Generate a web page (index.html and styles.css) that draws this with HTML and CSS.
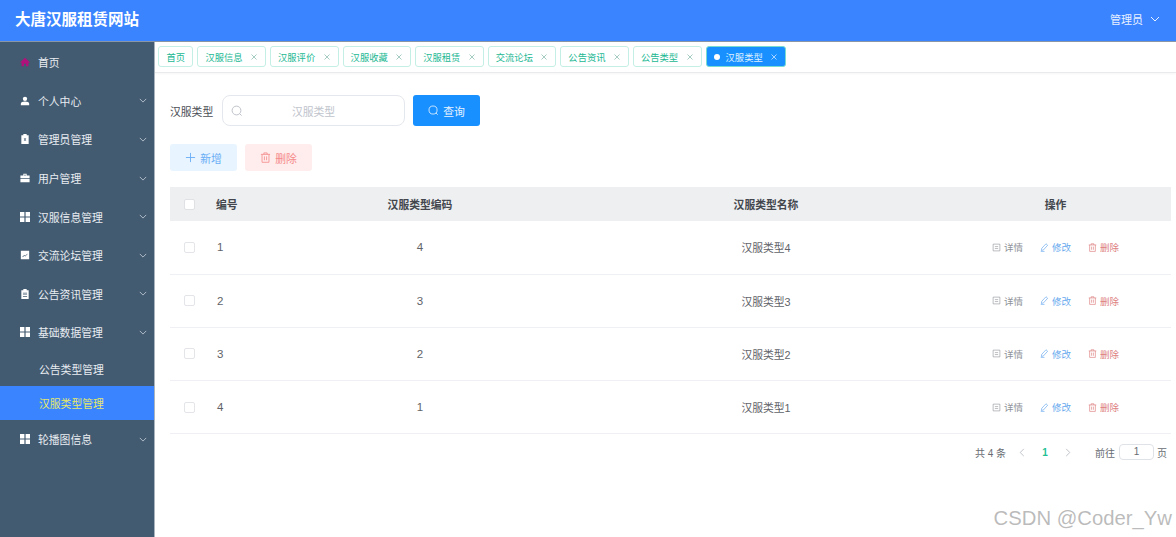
FILE: index.html
```html
<!DOCTYPE html>
<html lang="zh">
<head>
<meta charset="utf-8">
<title>大唐汉服租赁网站</title>
<link rel="stylesheet" href="styles.css">
</head>
<body>
<svg class="sprites" width="0" height="0" aria-hidden="true">
  <symbol id="chev" viewBox="0 0 10 6"><path d="M1 1l4 4 4-4" fill="none" stroke="currentColor" stroke-width="1"/></symbol>
  <symbol id="grid" viewBox="0 0 10 10"><path fill="currentColor" d="M0 0h4.400v4.400H0zM5.600 0H10v4.400H5.600zM0 5.600h4.400V10H0zM5.600 5.600H10V10H5.600z"/></symbol>
  <symbol id="close" viewBox="0 0 8 8"><path d="M1.500 1.500l5 5M6.500 1.500l-5 5" fill="none" stroke="currentColor" stroke-width=".8"/></symbol>
  <symbol id="search" viewBox="0 0 12 12"><circle cx="5.500" cy="5.500" r="4.400" fill="none" stroke="currentColor" stroke-width=".9"/><path d="M8.600 8.600l2 2" stroke="currentColor" stroke-width=".9"/></symbol>
  <symbol id="trash" viewBox="0 0 12 12"><path d="M1 2.600h10M4.200 2.600V1h3.600v1.600M2.200 2.600v8.600h7.600V2.600M4.800 4.800v4.200M7.200 4.800v4.200" fill="none" stroke="currentColor" stroke-width=".9"/></symbol>
  <symbol id="edit" viewBox="0 0 12 12"><path d="M8 1l2.200 2L4.600 9.200l-2.800.8.500-2.900zM1 11.200h5" fill="none" stroke="currentColor" stroke-width=".9"/></symbol>
  <symbol id="doc" viewBox="0 0 12 12"><path d="M1.500 1.500h9v9h-9zM3.800 4.800h4.400M3.800 7.400h4.400" fill="none" stroke="currentColor" stroke-width=".8"/></symbol>
</svg>

<header class="topbar">
  <h1 class="brand">大唐汉服租赁网站</h1>
  <div class="user">管理员<svg class="user-chev"><use href="#chev"/></svg></div>
</header>

<div class="shell">
  <nav class="sidebar">
    <a class="menu-item">
      <svg class="menu-icon home" viewBox="0 0 12 12"><path fill="currentColor" d="M6 .8L.6 6v1h1.300v4.200h2.900V8h2.400v3.200h2.900V7h1.300V6z"/></svg>
      <span class="menu-label">首页</span>
    </a>
    <a class="menu-item">
      <svg class="menu-icon" viewBox="0 0 12 12"><circle cx="6" cy="3.400" r="2.600" fill="currentColor"/><path fill="currentColor" d="M1 11V9.200C1 7.400 3 6.600 6 6.600s5 .8 5 2.600V11z"/></svg>
      <span class="menu-label">个人中心</span><svg class="menu-chev"><use href="#chev"/></svg>
    </a>
    <a class="menu-item">
      <svg class="menu-icon" viewBox="0 0 12 12"><path fill="currentColor" fill-rule="evenodd" d="M4 0h4v1.400h2.400V12H1.600V1.400H4zM4.400 5l1.100 1.500L4.400 8h1l.6-.9.600.9h1L6.500 6.500 7.600 5h-1L6 5.900 5.400 5z"/></svg>
      <span class="menu-label">管理员管理</span><svg class="menu-chev"><use href="#chev"/></svg>
    </a>
    <a class="menu-item">
      <svg class="menu-icon" viewBox="0 0 12 12"><path fill="currentColor" d="M4 1h4v2h3.500v3h-11V3H4zm1 1v1h2V2zM.5 7h11v4H.5z"/></svg>
      <span class="menu-label">用户管理</span><svg class="menu-chev"><use href="#chev"/></svg>
    </a>
    <a class="menu-item">
      <svg class="menu-icon"><use href="#grid"/></svg>
      <span class="menu-label">汉服信息管理</span><svg class="menu-chev"><use href="#chev"/></svg>
    </a>
    <a class="menu-item">
      <svg class="menu-icon" viewBox="0 0 12 12"><path fill="currentColor" fill-rule="evenodd" d="M1 1h10v10H1zM2.800 8.200l.5.500 1.800-1.800 1.200 1 2.900-3-.5-.5-2.400 2.500-1.200-1z"/></svg>
      <span class="menu-label">交流论坛管理</span><svg class="menu-chev"><use href="#chev"/></svg>
    </a>
    <a class="menu-item">
      <svg class="menu-icon" viewBox="0 0 12 12"><path fill="currentColor" fill-rule="evenodd" d="M4 0h4v1.400h2.400V12H1.600V1.400H4zM3.500 4.500v.8h5v-.8zM3.500 6.500v.8h5v-.8zM3.500 8.500v.8h5v-.8z"/></svg>
      <span class="menu-label">公告资讯管理</span><svg class="menu-chev"><use href="#chev"/></svg>
    </a>
    <a class="menu-item">
      <svg class="menu-icon"><use href="#grid"/></svg>
      <span class="menu-label">基础数据管理</span><svg class="menu-chev"><use href="#chev"/></svg>
    </a>
    <a class="sub-item">公告类型管理</a>
    <a class="sub-item active">汉服类型管理</a>
    <a class="menu-item">
      <svg class="menu-icon"><use href="#grid"/></svg>
      <span class="menu-label">轮播图信息</span><svg class="menu-chev"><use href="#chev"/></svg>
    </a>
  </nav>

  <main class="main">
    <div class="tags">
      <span class="tag first">首页</span>
      <span class="tag">汉服信息<svg class="tag-x"><use href="#close"/></svg></span>
      <span class="tag">汉服评价<svg class="tag-x"><use href="#close"/></svg></span>
      <span class="tag">汉服收藏<svg class="tag-x"><use href="#close"/></svg></span>
      <span class="tag">汉服租赁<svg class="tag-x"><use href="#close"/></svg></span>
      <span class="tag">交流论坛<svg class="tag-x"><use href="#close"/></svg></span>
      <span class="tag">公告资讯<svg class="tag-x"><use href="#close"/></svg></span>
      <span class="tag">公告类型<svg class="tag-x"><use href="#close"/></svg></span>
      <span class="tag current"><i class="dot"></i>汉服类型<svg class="tag-x"><use href="#close"/></svg></span>
    </div>

    <section class="content">
      <div class="filter">
        <label class="filter-label">汉服类型</label>
        <div class="search-input">
          <svg class="search-icon"><use href="#search"/></svg>
          <span class="placeholder">汉服类型</span>
        </div>
        <button class="btn primary"><svg class="btn-icon"><use href="#search"/></svg>查询</button>
      </div>

      <div class="actions">
        <button class="btn add"><svg class="btn-icon" viewBox="0 0 12 12"><path d="M6 1v10M1 6h10" stroke="currentColor" stroke-width="1"/></svg>新增</button>
        <button class="btn del"><svg class="btn-icon"><use href="#trash"/></svg>删除</button>
      </div>

      <table class="grid-table">
        <colgroup>
          <col class="c-check"><col class="c-id"><col class="c-code"><col class="c-name"><col class="c-ops">
        </colgroup>
        <thead>
          <tr>
            <th><span class="check head"></span></th>
            <th class="left">编号</th>
            <th>汉服类型编码</th>
            <th>汉服类型名称</th>
            <th>操作</th>
          </tr>
        </thead>
        <tbody>
          <tr>
            <td><span class="check"></span></td><td class="left num">1</td><td class="num">4</td><td>汉服类型4</td>
            <td><div class="ops"><span class="op view"><svg><use href="#doc"/></svg>详情</span><span class="op edit"><svg><use href="#edit"/></svg>修改</span><span class="op remove"><svg><use href="#trash"/></svg>删除</span></div></td>
          </tr>
          <tr>
            <td><span class="check"></span></td><td class="left num">2</td><td class="num">3</td><td>汉服类型3</td>
            <td><div class="ops"><span class="op view"><svg><use href="#doc"/></svg>详情</span><span class="op edit"><svg><use href="#edit"/></svg>修改</span><span class="op remove"><svg><use href="#trash"/></svg>删除</span></div></td>
          </tr>
          <tr>
            <td><span class="check"></span></td><td class="left num">3</td><td class="num">2</td><td>汉服类型2</td>
            <td><div class="ops"><span class="op view"><svg><use href="#doc"/></svg>详情</span><span class="op edit"><svg><use href="#edit"/></svg>修改</span><span class="op remove"><svg><use href="#trash"/></svg>删除</span></div></td>
          </tr>
          <tr>
            <td><span class="check"></span></td><td class="left num">4</td><td class="num">1</td><td>汉服类型1</td>
            <td><div class="ops"><span class="op view"><svg><use href="#doc"/></svg>详情</span><span class="op edit"><svg><use href="#edit"/></svg>修改</span><span class="op remove"><svg><use href="#trash"/></svg>删除</span></div></td>
          </tr>
        </tbody>
      </table>

      <div class="pager">
        <span class="total">共 4 条</span>
        <svg class="pg-arrow prev" viewBox="0 0 6 10"><path d="M5 1L1 5l4 4" fill="none" stroke="currentColor"/></svg>
        <span class="pg-num">1</span>
        <svg class="pg-arrow next" viewBox="0 0 6 10"><path d="M1 1l4 4-4 4" fill="none" stroke="currentColor"/></svg>
        <span class="goto">前往</span>
        <span class="pg-input">1</span>
        <span class="page-word">页</span>
      </div>
    </section>
  </main>
</div>

<div class="watermark">CSDN @Coder_Yw</div>
</body>
</html>
```

FILE: styles.css
```css
* { box-sizing: border-box; }
html, body { margin: 0; height: 100%; }
body {
  width: 1176px;
  height: 537px;
  overflow: hidden;
  display: flex;
  flex-direction: column;
  position: relative;
  background: #fff;
  font-family: "Liberation Sans", "Noto Sans CJK SC", sans-serif;
  color: #606266;
}
.sprites { position: absolute; }

.topbar {
  flex: 0 0 42px;
  display: flex;
  align-items: center;
  justify-content: space-between;
  padding: 0 16px 2px 15px;
  background: #3a84ff;
  border-bottom: 1px solid #8a96a6;
}
.brand { margin: 0; font-size: 15.5px; font-weight: 700; color: #fff; line-height: 1; }
.user { display: flex; align-items: center; font-size: 11px; color: #e8f1ff; margin-bottom: 2px; }
.user-chev { width: 10px; height: 6px; margin-left: 7px; color: #e8f1ff; }

.shell { flex: 1; display: flex; min-height: 0; }

.sidebar {
  flex: 0 0 155px;
  background: #435b71;
  border-right: 1px solid #a9b4bf;
  padding-top: 1px;
}
.menu-item {
  height: 38.6px;
  display: flex;
  align-items: center;
  padding: 0 7px 0 20px;
  color: #e9edf1;
  font-size: 10.8px;
}
.menu-icon { width: 10px; height: 10px; margin-right: 8px; flex: none; color: #fff; }
.menu-icon.home { color: #b0127b; }
.menu-label { flex: 1; }
.menu-chev { width: 8px; height: 5px; color: #c9d2da; flex: none; }
.sub-item {
  display: flex;
  align-items: center;
  height: 34px;
  padding-left: 39px;
  font-size: 10.8px;
  color: #e9edf1;
}
.sub-item.active { background: #3a84ff; color: #e6e86a; }

.main { flex: 1; min-width: 0; }

.tags {
  height: 31px;
  display: flex;
  gap: 4px;
  padding: 4px 0 0 3px;
  border-bottom: 1px solid #e8eaec;
  box-shadow: 0 1px 2px rgba(0, 0, 0, .04);
  align-items: flex-start;
}
.tag {
  height: 21px;
  display: inline-flex;
  align-items: center;
  padding: 0 7px;
  background: #fff;
  border: 1px solid #c4efe5;
  border-radius: 3px;
  color: #22b893;
  font-size: 9.3px;
  white-space: nowrap;
}
.tag.first { padding: 0 7.4px; }
.tag-x { width: 8px; height: 8px; margin-left: 7.4px; color: #8dbfb4; }
.tag.current { background: #1890ff; color: #dff0ff; border-color: #79dcd0; }
.tag.current .tag-x { color: #cfe6ff; }
.dot { width: 6px; height: 6px; border-radius: 50%; background: #fff; margin-right: 6px; }

.content { padding: 22px 5px 0 15px; }

.filter { display: flex; align-items: center; height: 31px; }
.filter-label { width: 52px; font-size: 10.8px; color: #4b4f55; }
.search-input {
  width: 183px;
  height: 31px;
  display: flex;
  align-items: center;
  border: 1px solid #e4e7ed;
  border-radius: 8px;
  padding-left: 8px;
}
.search-icon { width: 12px; height: 12px; color: #b8bcc4; flex: none; }
.placeholder { flex: 1; text-align: center; font-size: 10.8px; color: #c0c4cc; padding-right: 20px; }

.btn {
  display: inline-flex;
  align-items: center;
  justify-content: center;
  width: 67px;
  border: 0;
  border-radius: 3px;
  font-family: inherit;
  font-size: 10.8px;
  padding: 0;
}
.btn-icon { width: 11px; height: 11px; margin-right: 4px; }
.primary { height: 31px; margin-left: 8px; background: #1890ff; color: #e8f3ff; }
.actions { display: flex; gap: 8px; margin-top: 18px; }
.actions .btn { height: 27px; }
.add { background: #e8f4ff; color: #6aaef5; }
.del { background: #ffeded; color: #f58a8a; }

.grid-table {
  width: 1001px;
  margin-top: 16px;
  border-collapse: collapse;
  table-layout: fixed;
  font-size: 10.8px;
}
.c-check { width: 36px; }
.c-id { width: 42px; }
.c-code { width: 344px; }
.c-name { width: 348px; }
.c-ops { width: 231px; }
th {
  height: 34px;
  padding: 0;
  background: #eeeff1;
  color: #43474d;
  font-weight: 700;
  text-align: center;
}
td {
  height: 53.2px;
  padding: 0;
  text-align: center;
  color: #5f6368;
  border-bottom: 1px solid #eef0f3;
}
td.num { font-size: 11.5px; }
.left { text-align: left; padding-left: 10px; }
td.left { padding-left: 11px; }
.check {
  display: block;
  width: 11px;
  height: 11px;
  margin-left: 14px;
  border: 1px solid #e3e5e9;
  border-radius: 2px;
  background: #fff;
}
.check.head { border-color: #dfe1e5; }

.ops { display: flex; gap: 17px; justify-content: flex-start; padding-left: 52px; font-size: 9.5px; }
.op { display: inline-flex; align-items: center; }
.op svg { width: 9px; height: 9px; margin-right: 3px; flex: none; }
.view { color: #8e9297; }
.edit { color: #68a9ee; }
.remove { color: #dd8080; }

.pager {
  display: flex;
  align-items: center;
  justify-content: flex-end;
  height: 16px;
  margin-top: 10px;
  padding-right: 4px;
  font-size: 10px;
  color: #686c72;
}
.total { margin-right: 13px; }
.pg-arrow { width: 6px; height: 9px; color: #b8bcc4; }
.pg-num { width: 40px; text-align: center; color: #1fbf94; font-weight: 700; }
.next { margin-right: 24px; }
.goto { margin-right: 4px; }
.pg-input {
  width: 35px;
  height: 16px;
  border: 1px solid #dfe2e7;
  border-radius: 4px;
  text-align: center;
  line-height: 14px;
  margin-right: 3px;
}

.watermark {
  position: absolute;
  right: 4px;
  bottom: 6px;
  font-family: "Liberation Sans", sans-serif;
  font-size: 20.3px;
  line-height: 26px;
  color: rgba(120, 120, 120, .5);
  white-space: nowrap;
}
```
